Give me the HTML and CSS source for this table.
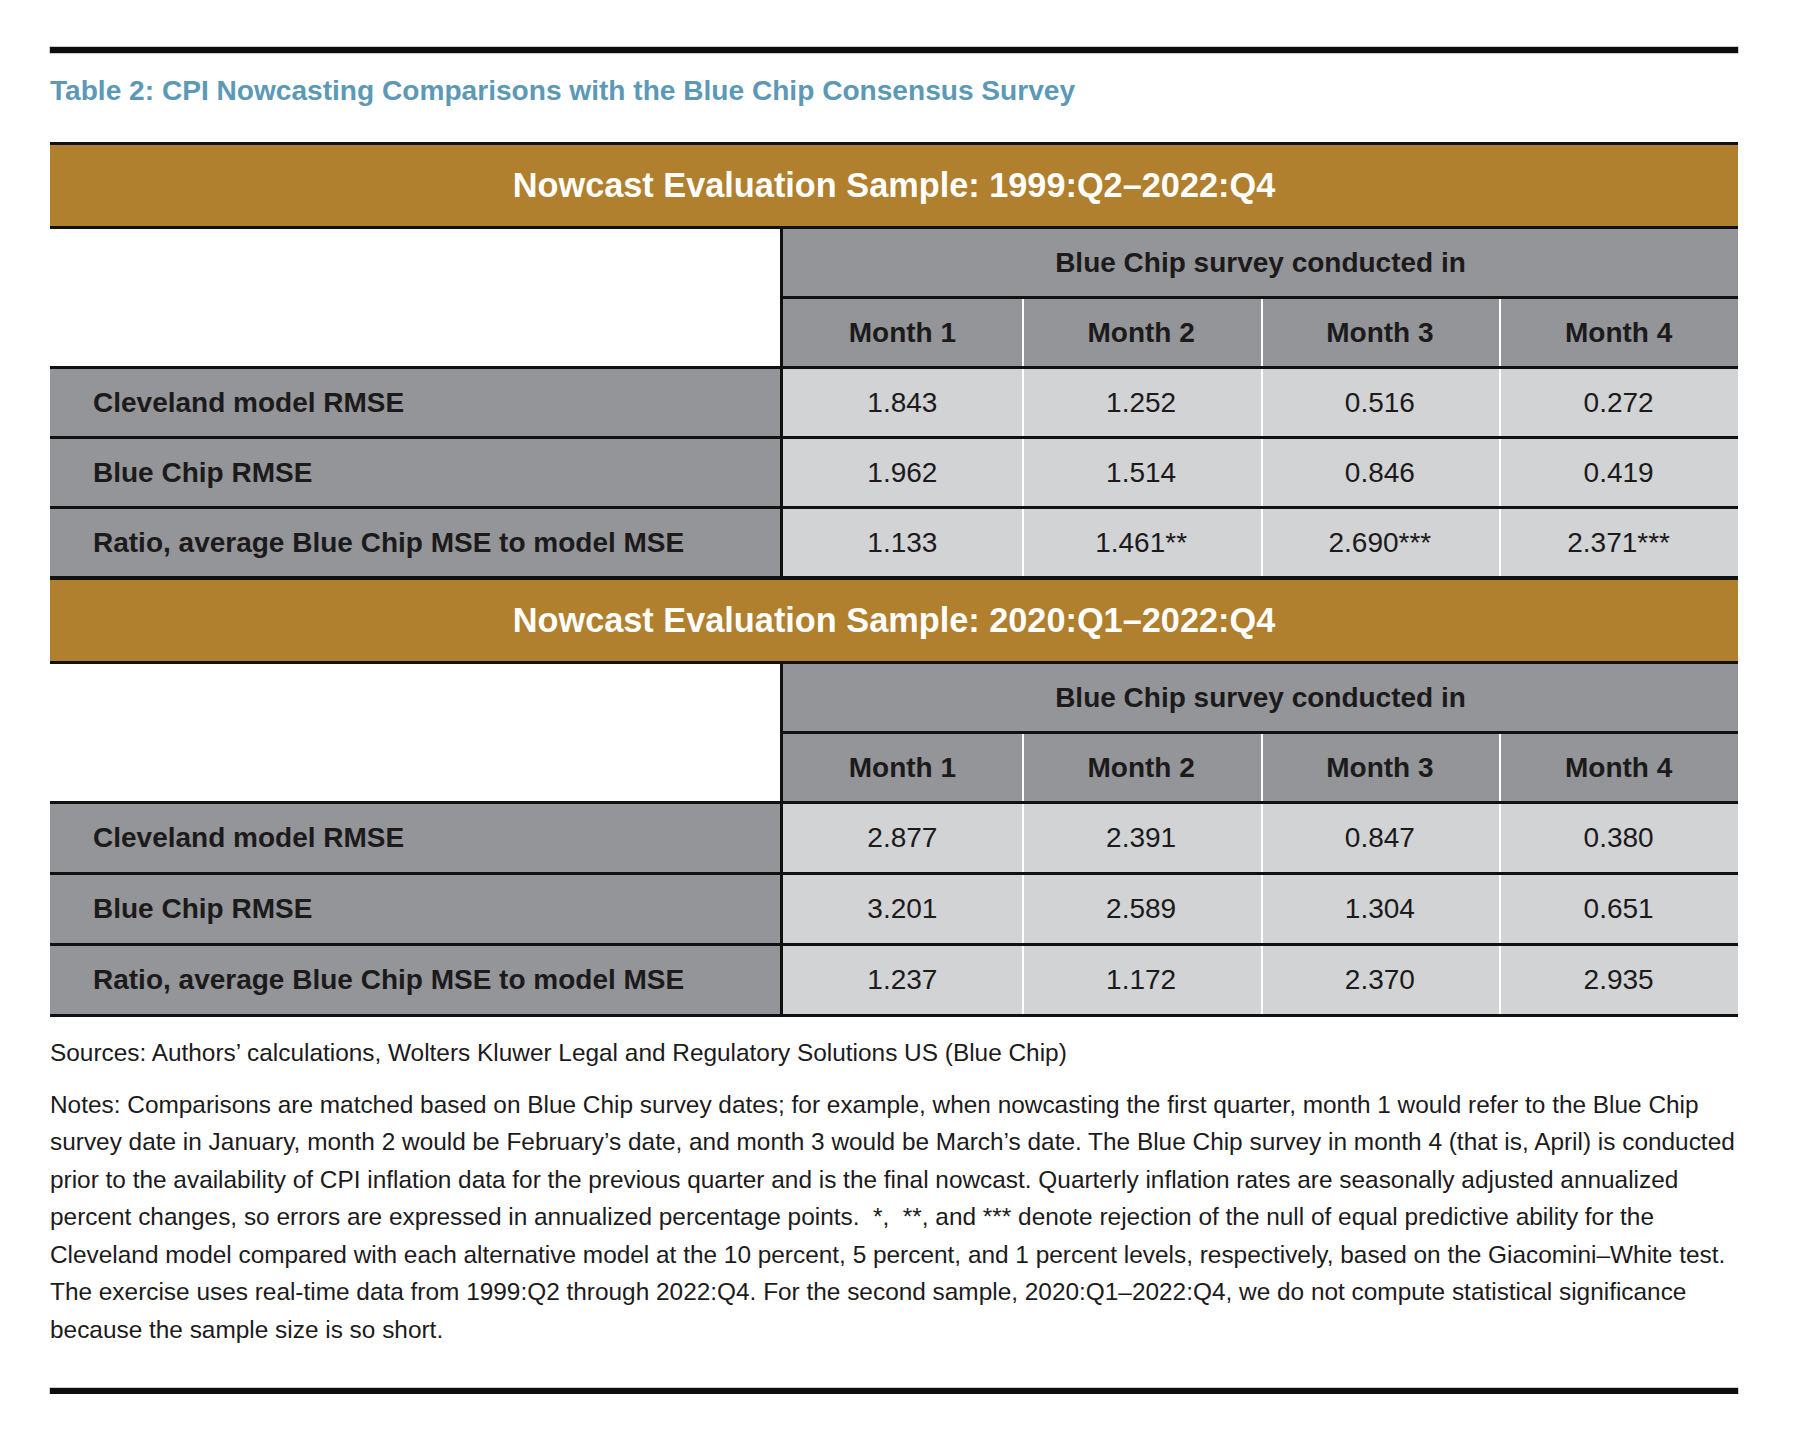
FILE: index.html
```html
<!DOCTYPE html>
<html lang="en">
<head>
<meta charset="utf-8">
<title>Table 2: CPI Nowcasting Comparisons</title>
<link rel="stylesheet" href="styles.css">
</head>
<body>
<div class="page">
  <div class="rule"></div>
  <h1 class="title">Table 2: CPI Nowcasting Comparisons with the Blue Chip Consensus Survey</h1>

  <div class="tbl first">
    <div class="band">Nowcast Evaluation Sample: 1999:Q2–2022:Q4</div>
    <div class="corner"></div>
    <div class="survey">Blue Chip survey conducted in</div>
    <div class="mh">Month 1</div>
    <div class="mh sep">Month 2</div>
    <div class="mh sep">Month 3</div>
    <div class="mh sep">Month 4</div>

    <div class="lbl">Cleveland model RMSE</div>
    <div class="v">1.843</div>
    <div class="v sep">1.252</div>
    <div class="v sep">0.516</div>
    <div class="v sep">0.272</div>

    <div class="lbl">Blue Chip RMSE</div>
    <div class="v">1.962</div>
    <div class="v sep">1.514</div>
    <div class="v sep">0.846</div>
    <div class="v sep">0.419</div>

    <div class="lbl">Ratio, average Blue Chip MSE to model MSE</div>
    <div class="v">1.133</div>
    <div class="v sep">1.461**</div>
    <div class="v sep">2.690***</div>
    <div class="v sep">2.371***</div>
  </div>

  <div class="tbl second">
    <div class="band">Nowcast Evaluation Sample: 2020:Q1–2022:Q4</div>
    <div class="corner"></div>
    <div class="survey">Blue Chip survey conducted in</div>
    <div class="mh">Month 1</div>
    <div class="mh sep">Month 2</div>
    <div class="mh sep">Month 3</div>
    <div class="mh sep">Month 4</div>

    <div class="lbl">Cleveland model RMSE</div>
    <div class="v">2.877</div>
    <div class="v sep">2.391</div>
    <div class="v sep">0.847</div>
    <div class="v sep">0.380</div>

    <div class="lbl">Blue Chip RMSE</div>
    <div class="v">3.201</div>
    <div class="v sep">2.589</div>
    <div class="v sep">1.304</div>
    <div class="v sep">0.651</div>

    <div class="lbl">Ratio, average Blue Chip MSE to model MSE</div>
    <div class="v">1.237</div>
    <div class="v sep">1.172</div>
    <div class="v sep">2.370</div>
    <div class="v sep">2.935</div>
  </div>

  <p class="sources">Sources: Authors’ calculations, Wolters Kluwer Legal and Regulatory Solutions US (Blue Chip)</p>
  <p class="notes">Notes: Comparisons are matched based on Blue Chip survey dates; for example, when nowcasting the first quarter, month 1 would refer to the Blue Chip<br>survey date in January, month 2 would be February’s date, and month 3 would be March’s date. The Blue Chip survey in month 4 (that is, April) is conducted<br>prior to the availability of CPI inflation data for the previous quarter and is the final nowcast. Quarterly inflation rates are seasonally adjusted annualized<br>percent changes, so errors are expressed in annualized percentage points. &nbsp;*, &nbsp;**, and *** denote rejection of the null of equal predictive ability for the<br>Cleveland model compared with each alternative model at the 10 percent, 5 percent, and 1 percent levels, respectively, based on the Giacomini–White test.<br>The exercise uses real-time data from 1999:Q2 through 2022:Q4. For the second sample, 2020:Q1–2022:Q4, we do not compute statistical significance<br>because the sample size is so short.</p>

  <div class="rule bottom"></div>
</div>
</body>
</html>
```

FILE: styles.css
```css
* {
  box-sizing: border-box;
}

html, body {
  margin: 0;
  padding: 0;
  background: #ffffff;
}

body {
  font-family: "Liberation Sans", Arial, Helvetica, sans-serif;
  color: #1c1a1b;
}

.page {
  width: 1800px;
  padding: 47px 62px 0 50px;
}

.rule {
  height: 6px;
  background: #0d0d0d;
  box-shadow: 0 0 0 0.5px #9a9a9a;
}

.rule.bottom {
  margin-top: 40px;
}

.title {
  margin: 18px 0 31px;
  font-size: 28.1px;
  line-height: 40px;
  font-weight: 700;
  color: #5b99b7;
}

.tbl {
  display: grid;
  grid-template-columns: 733px repeat(4, 1fr);
}

.tbl.first {
  border-top: 3px solid #111;
}

.tbl > div {
  display: flex;
  align-items: center;
  justify-content: center;
  font-size: 28px;
  border-bottom: 3px solid #111;
}

.tbl > .band {
  grid-column: 1 / -1;
  height: 84px;
  background: #b0802e;
  color: #ffffff;
  font-size: 34.3px;
  font-weight: 700;
}

.tbl.second > .band {
  height: 85px;
  border-top: 1px solid #111;
}

.tbl > .corner {
  grid-row: span 2;
  background: #ffffff;
  border-right: 3px solid #111;
}

.tbl > .survey {
  grid-column: 2 / -1;
  height: 70px;
  background: #939598;
  font-weight: 700;
}

.tbl > .mh {
  height: 70px;
  background: #939598;
  font-weight: 700;
}

.tbl > .lbl {
  height: 70px;
  justify-content: flex-start;
  padding-left: 43px;
  background: #939598;
  font-weight: 700;
  border-right: 3px solid #111;
}

.tbl > .v {
  height: 70px;
  background: #d1d3d4;
}

.tbl.second > .lbl,
.tbl.second > .v {
  height: 71px;
}

.tbl > .sep {
  box-shadow: inset 2px 0 0 #ffffff;
}

.sources,
.notes {
  margin: 0;
  font-size: 24.4px;
  line-height: 37.5px;
  color: #1c1a1b;
  white-space: nowrap;
}

.sources {
  margin-top: 17px;
}

.notes {
  margin-top: 14px;
}
```
